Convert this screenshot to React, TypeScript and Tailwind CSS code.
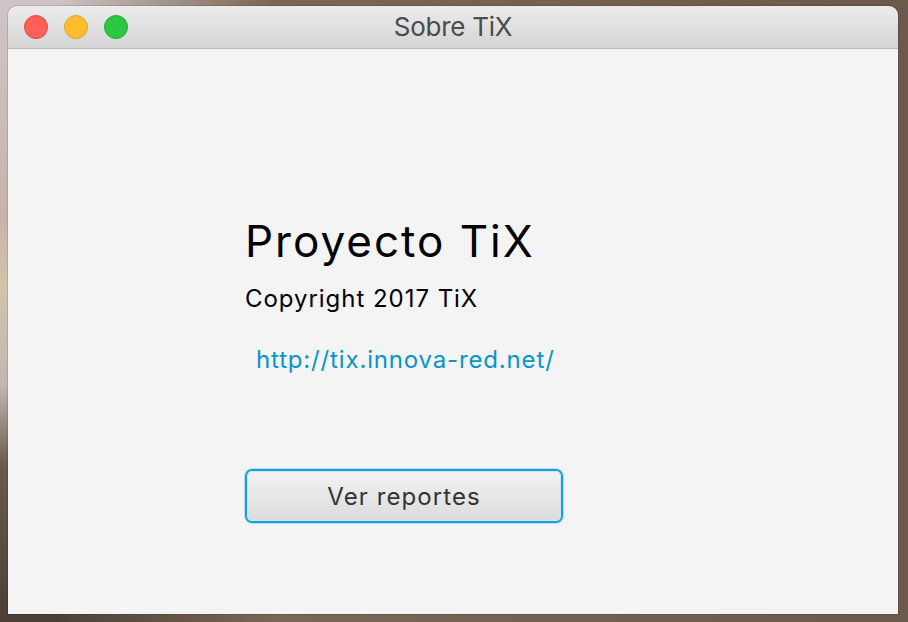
import React from 'react'

// ── Semáforo de la barra de título ────────────────────────────────────────────

function TrafficLights() {
  return (
    <div className="flex items-center gap-4">
      <span className="h-6 w-6 rounded-full border border-[#e2463f] bg-[#fe5f57]" />
      <span className="h-6 w-6 rounded-full border border-[#e1a23a] bg-[#febc2e]" />
      <span className="h-6 w-6 rounded-full border border-[#1fa834] bg-[#2ac840]" />
    </div>
  )
}

// ── Ventana ───────────────────────────────────────────────────────────────────

export default function App() {
  return (
    <div
      className="flex h-[622px] w-[908px] flex-col overflow-hidden pb-[8px] pl-[8px] pr-[10px] pt-[6px] bg-[linear-gradient(to_right,transparent_0%,transparent_6%,#7a6655_30%,#6b5a4c_100%),linear-gradient(to_bottom,#cfc5c6_0%,#c9b3ac_35%,#d2c4a8_46%,#c2b6b5_62%,#6a5a4b_75%,#4b3f35_100%)]"
      style={{ fontFamily: 'Inter, "Noto Sans", sans-serif' }}
    >
      <div className="flex flex-1 flex-col overflow-hidden rounded-t-[9px] shadow-[0_0_0_1px_rgba(0,0,0,0.12)]">
        {/* ── Barra de título ── */}
        <div className="relative flex h-[43px] shrink-0 items-center border-b border-[#b9b9b9] bg-linear-to-b from-[#ececec] to-[#d4d4d4] px-4">
          <TrafficLights />
          <div className="absolute inset-0 flex items-center justify-center text-[26px] leading-none tracking-[-0.01em] text-[#4b4b4b]">
            Sobre TiX
          </div>
        </div>

        {/* ── Contenido ── */}
        <div className="flex flex-1 flex-col bg-[#f4f4f4] pl-[237px] pt-[170px]">
          <h1 className="text-[44px] leading-[44px] tracking-[0.045em] text-black">Proyecto TiX</h1>
          <p className="mt-[24px] text-[24px] leading-[24px] tracking-[0.04em] text-black">
            Copyright 2017 TiX
          </p>
          <a className="ml-[11px] mt-[37px] text-[24px] leading-[24px] tracking-[0.035em] text-[#0895c9]">
            http://tix.innova-red.net/
          </a>

          <button className="mt-[97px] h-[54px] w-[318px] rounded-[7px] border-2 border-[#14a0dc] p-0 shadow-[0_0_0_1px_#b6def1]">
            <div className="flex h-full w-full items-center justify-center rounded-[5px] border border-[#cfe7f2] bg-linear-to-b from-[#f2f2f2] to-[#dcdcdc] pt-[2px] text-[24px] leading-none tracking-[0.045em] text-[#333333]">
              Ver reportes
            </div>
          </button>
        </div>
      </div>
    </div>
  )
}
